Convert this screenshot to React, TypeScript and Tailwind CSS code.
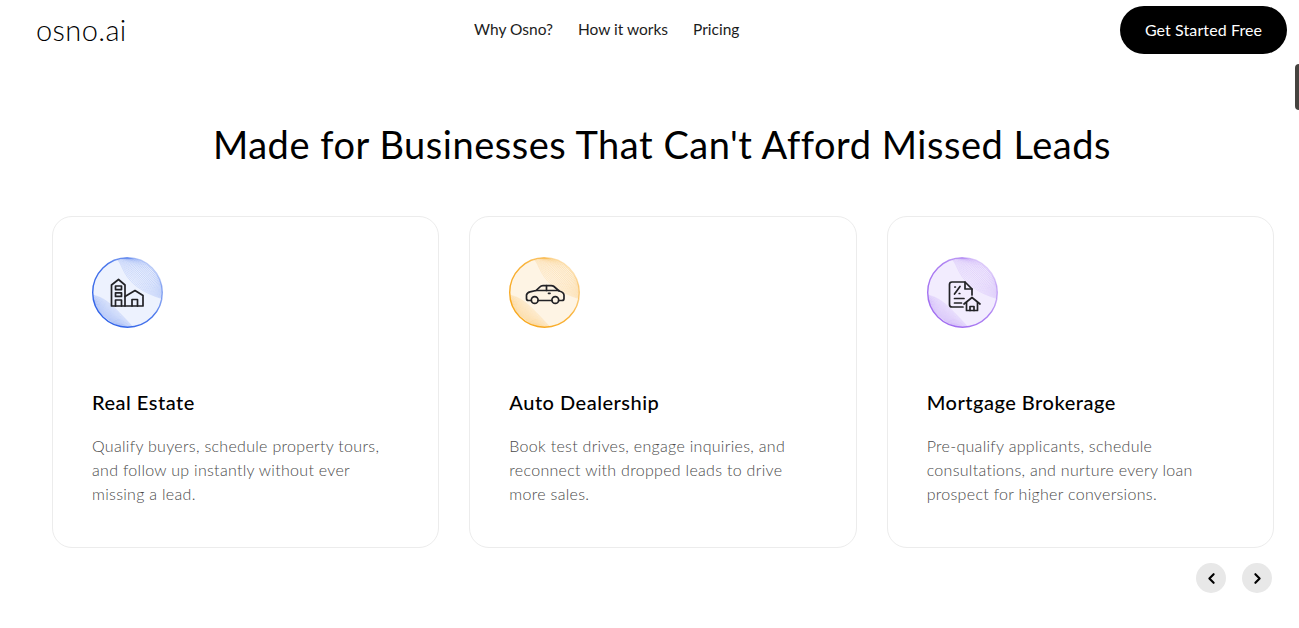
import React from 'react';
import { ChevronLeft, ChevronRight } from 'lucide-react';

const font = "font-['Lato','Open_Sans',sans-serif]";

// fine wave lines + coloured rim behind every industry icon
const IconCircle = ({ id, color, fill, children }: { id: string; color: string; fill: string; children: React.ReactNode }) => {
  const lines = Array.from({ length: 18 }, (_, i) => i / 17);
  const mix = (a: number, b: number, t: number) => (a + (b - a) * t).toFixed(2);
  return (
    <svg width="71" height="71" viewBox="0 0 71 71" fill="none">
      <defs>
        <linearGradient id={id} x1="0.1" y1="0.9" x2="0.9" y2="0.2">
          <stop offset="0" stopColor={color} />
          <stop offset="0.6" stopColor={color} stopOpacity="0.85" />
          <stop offset="1" stopColor={color} stopOpacity="0.3" />
        </linearGradient>
        <clipPath id={`${id}-clip`}>
          <circle cx="35.5" cy="35.5" r="35" />
        </clipPath>
      </defs>
      <circle cx="35.5" cy="35.5" r="35" fill={fill} />
      <g clipPath={`url(#${id}-clip)`} stroke={color} strokeWidth="0.3">
        {lines.map((t) => (
          <path key={t} strokeOpacity={0.45 + t * 0.35} d={`M${mix(22, 34, t)} ${mix(0, 0.5, t)} C${mix(34, 46, t)} ${mix(6, 2, t)} ${mix(26, 62, t)} ${mix(28, 8, t)} ${mix(71, 71, t)} ${mix(42, 30, t)}`} />
        ))}
        {lines.map((t) => (
          <path key={t} strokeOpacity={0.4 + t * 0.5} d={`M${mix(0, 2, t)} ${mix(38, 48, t)} C${mix(14, 8, t)} ${mix(40, 56, t)} ${mix(24, 16, t)} ${mix(52, 64, t)} ${mix(42, 30, t)} ${mix(71, 71, t)}`} />
        ))}
      </g>
      <circle cx="35.5" cy="35.5" r="34.8" stroke={`url(#${id})`} strokeWidth="1.4" />
      <g stroke="#222226" strokeWidth="1.7" strokeLinejoin="round" strokeLinecap="round">{children}</g>
    </svg>
  );
};

const cards = [
  {
    title: 'Real Estate',
    lines: ['Qualify buyers, schedule property tours,', 'and follow up instantly without ever', 'missing a lead.'],
    id: 'blue',
    color: '#2f62e8',
    fill: '#edf2fe',
    icon: (
      <>
        <path d="M19.5 49V28L26.5 22.5L33 28V49Z" />
        <rect x="23.5" y="29" width="6" height="3.6" />
        <rect x="23.5" y="35.8" width="6" height="3.6" />
        <path d="M23.5 49V43H29.5V49" />
        <path d="M33 39.5L43 33.5L51 38.5V49H33" />
        <path d="M40 49V42.5H45.5V49" />
      </>
    ),
  },
  {
    title: 'Auto Dealership',
    lines: ['Book test drives, engage inquiries, and', 'reconnect with dropped leads to drive', 'more sales.'],
    id: 'amber',
    color: '#f8a71c',
    fill: '#fef4e4',
    icon: (
      <>
        <circle cx="25.7" cy="43" r="3.4" />
        <circle cx="46.3" cy="43" r="3.4" />
        <path d="M22.3 43.5H19.5Q17.5 43.5 17.5 41.5V38Q18 35.5 21 34.8L27 33.5L31 29.8Q32 28.6 34 28.6H42Q44 28.6 45 29.5L50 34Q54.6 35 55 38V41.5Q55 43.5 53 43.5H49.7" />
        <path d="M29.1 43.5H42.9" />
        <path d="M27 33.5H50" />
        <path d="M37.5 28.6V33.5" />
        <path d="M39.5 36.3H41" />
      </>
    ),
  },
  {
    title: 'Mortgage Brokerage',
    lines: ['Pre-qualify applicants, schedule', 'consultations, and nurture every loan', 'prospect for higher conversions.'],
    id: 'violet',
    color: '#a06cf0',
    fill: '#f2ecfe',
    icon: (
      <>
        <path d="M36 50H25Q22.5 50 22.5 47.5V27.5Q22.5 25 25 25H38L45 32V38" />
        <path d="M38 25V32H45" />
        <path d="M27.5 37L33 29.5" />
        <path d="M27.8 30H28.4M32.2 36.5H32.8" />
        <path d="M27.5 41.5H37M27.5 46H34.5" />
        <path d="M37 47L45 40.5L53 47" />
        <path d="M39.5 45.5V53.5H50.5V45.5" />
        <path d="M43 53.5V49.5H47V53.5" />
      </>
    ),
  },
];

export default function App() {
  return (
    <div className={`relative min-h-[628px] bg-white text-black ${font}`}>
      {/* Nav */}
      <header className="flex h-[60px] items-center pl-[36px] pr-[12px]">
        <div className="w-[89px] pb-[1px] text-[29px] font-light leading-none tracking-[0.4px]">osno.ai</div>
        <nav className="ml-[349px] flex gap-[25px] pb-[1px] text-[15.5px] text-[#1c1c1c]">
          <a>Why Osno?</a>
          <a>How it works</a>
          <a>Pricing</a>
        </nav>
        <button className="ml-auto h-[48px] w-[167px] rounded-full bg-black text-[16px] tracking-[0.1px] text-white">Get Started Free</button>
      </header>

      {/* Tab peeking in from the right edge */}
      <div className="absolute right-0 top-[64px] h-[46px] w-[4px] rounded-l-md bg-[#45433f]" />

      {/* Industries */}
      <section className="pl-[52px] pr-[25px]">
        <h2 className="mt-[60px] pr-[2px] text-center text-[38px] leading-[48px] tracking-[0.53px]">Made for Businesses That Can't Afford Missed Leads</h2>
        <div className="mt-[48px] grid grid-cols-3 gap-[30px]">
          {cards.map((card) => (
            <div key={card.id} className="h-[332px] rounded-[20px] border border-[#ececec] px-[39px] pt-[40px]">
              <IconCircle id={card.id} color={card.color} fill={card.fill}>
                {card.icon}
              </IconCircle>
              <h3 className="mt-[60px] text-[20px] font-medium leading-[28px] tracking-[0.5px]">{card.title}</h3>
              <p className="mt-[18px] text-[16px] font-light leading-[24px] tracking-[0.3px] text-[#4a4a4a]">
                {card.lines.map((line) => (
                  <span key={line} className="block whitespace-nowrap">{line}</span>
                ))}
              </p>
            </div>
          ))}
        </div>
        <div className="mt-[15px] flex justify-end gap-[16px] pr-[2px]">
          <button className="flex h-[30px] w-[30px] items-center justify-center rounded-full bg-[#e8e8e8]">
            <ChevronLeft size={17} strokeWidth={3} />
          </button>
          <button className="flex h-[30px] w-[30px] items-center justify-center rounded-full bg-[#e8e8e8]">
            <ChevronRight size={17} strokeWidth={3} />
          </button>
        </div>
      </section>
    </div>
  );
}
